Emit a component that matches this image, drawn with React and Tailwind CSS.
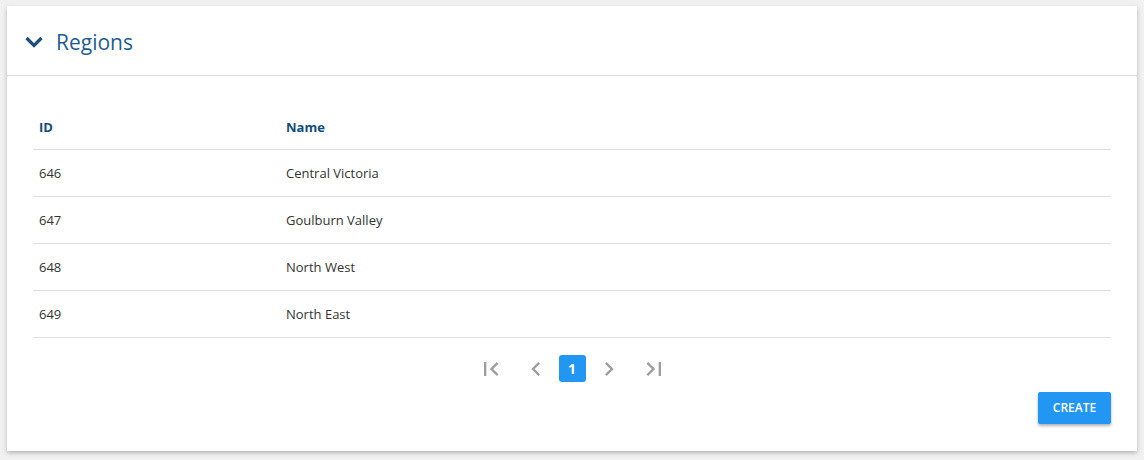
import React from 'react'
import { MdFirstPage, MdLastPage, MdChevronLeft, MdChevronRight } from 'react-icons/md'

const regions = [
  { id: 646, name: 'Central Victoria' },
  { id: 647, name: 'Goulburn Valley' },
  { id: 648, name: 'North West' },
  { id: 649, name: 'North East' },
]

const App = () => {
  return (
    <div
      className="min-h-[460px] w-full bg-[#f1f1f1] pt-[6px] pl-[7px] pr-[7px] pb-[9px]"
      style={{ fontFamily: '"Open Sans", "Noto Sans", sans-serif' }}
    >
      <div className="bg-white shadow-[0_2px_4px_rgba(0,0,0,0.25)]">
        {/* Header */}
        <div className="h-[70px] flex items-center pl-[17px] border-b border-[#dcdcdc]">
          <svg width="20" height="12" viewBox="0 0 20 12" className="mt-[2px]">
            <path d="M2.5 2 L10 9.5 L17.5 2" fill="none" stroke="#1c4f7c" strokeWidth="3.2" />
          </svg>
          <h2 className="ml-[12px] text-[21px] text-[#1f5d8e] mt-[4px]">Regions</h2>
        </div>

        {/* Body */}
        <div className="px-[26px] pt-[28px] pb-[27px]">
          <table className="w-full text-[13px] border-collapse">
            <thead>
              <tr className="border-b border-[#e0e0e0]">
                <th className="w-[247px] h-[45px] pl-[6px] pt-[2px] text-left font-bold text-[#134d7c] align-middle">ID</th>
                <th className="h-[45px] pl-[6px] pt-[2px] text-left font-bold text-[#134d7c] align-middle">Name</th>
              </tr>
            </thead>
            <tbody>
              {regions.map((r) => (
                <tr key={r.id} className="border-b border-[#e0e0e0]">
                  <td className="h-[47px] pl-[6px] pt-[3px] text-[#333] align-middle">{r.id}</td>
                  <td className="h-[47px] pl-[6px] pt-[3px] text-[#333] align-middle">{r.name}</td>
                </tr>
              ))}
            </tbody>
          </table>

          {/* Pagination */}
          <div className="flex items-center justify-center mt-[17px] text-[#9e9e9e]">
            <MdFirstPage className="text-[28px]" />
            <MdChevronLeft className="text-[28px] ml-[17px]" />
            <span className="ml-[9px] w-[27px] h-[27px] rounded-[3px] bg-[#2196f3] text-white text-[14px] font-bold flex items-center justify-center">1</span>
            <MdChevronRight className="text-[28px] ml-[9px]" />
            <MdLastPage className="text-[28px] ml-[17px]" />
          </div>

          {/* Create */}
          <div className="flex justify-end mt-[9px]">
            <button className="w-[73px] h-[32px] rounded-[2px] bg-[#2196f3] text-white text-[12px] font-semibold uppercase shadow-[0_2px_3px_rgba(0,0,0,0.3)]">
              Create
            </button>
          </div>
        </div>
      </div>
    </div>
  )
}

export default App
